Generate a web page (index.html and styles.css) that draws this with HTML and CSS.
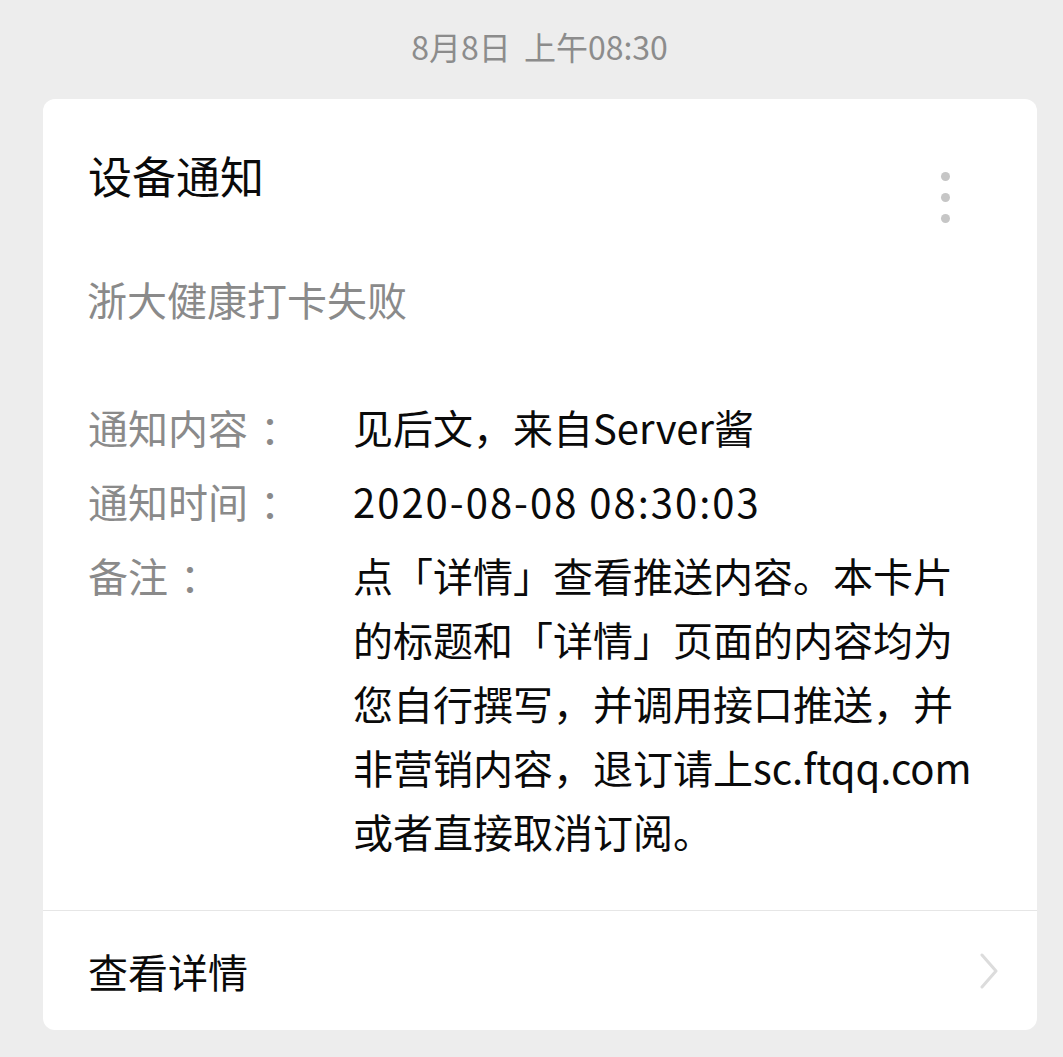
FILE: index.html
```html
<!DOCTYPE html>
<html lang="zh-CN">
<head>
<meta charset="utf-8">
<title>设备通知</title>
<link rel="stylesheet" href="styles.css">
</head>
<body>
  <div class="time-stamp">8月8日 上午08:30</div>
  <div class="card">
    <div class="card-header">
      <div class="card-title">设备通知</div>
      <div class="more" aria-label="更多">
        <span class="dot"></span>
        <span class="dot"></span>
        <span class="dot"></span>
      </div>
    </div>
    <div class="card-subtitle">浙大健康打卡失败</div>
    <div class="fields">
      <div class="label">通知内容<span class="colon">：</span></div>
      <div class="value">见后文，来自Server酱</div>
      <div class="label">通知时间<span class="colon">：</span></div>
      <div class="value value-time">2020-08-08 08:30:03</div>
      <div class="label">备注<span class="colon">：</span></div>
      <div class="value">点「详情」查看推送内容。本卡片的标题和「详情」页面的内容均为您自行撰写，并调用接口推送，并非营销内容，退订请上sc.ftqq.com或者直接取消订阅。</div>
    </div>
    <div class="card-footer">
      <span class="footer-text">查看详情</span>
      <svg class="chevron" width="20" height="36" viewBox="0 0 20 36" aria-hidden="true">
        <path d="M3 2 L17 18 L3 34" fill="none" stroke="#dcdcdc" stroke-width="3" stroke-linecap="round" stroke-linejoin="round"/>
      </svg>
    </div>
  </div>
</body>
</html>
```
FILE: styles.css
```css
html, body {
  margin: 0;
  padding: 0;
}
body {
  background: #ededed;
  font-family: "Noto Sans CJK SC", "Noto Sans", sans-serif;
  color: #111;
}
.time-stamp {
  padding: 26px 0 0 16px;
  height: 40px;
  line-height: 40px;
  font-size: 32px;
  word-spacing: 6px;
  color: #8c8c8c;
  text-align: center;
}
.card {
  margin: 33px 26px 0 43px;
  background: #fff;
  border-radius: 12px;
  overflow: hidden;
}
.card-header {
  display: flex;
  justify-content: space-between;
  align-items: flex-start;
  padding: 45px 87px 0 45px;
}
.card-title {
  font-size: 44px;
  line-height: 62px;
  color: #0a0a0a;
}
.more {
  display: flex;
  flex-direction: column;
  gap: 12px;
  margin-top: 28px;
}
.dot {
  display: block;
  width: 9px;
  height: 9px;
  border-radius: 50%;
  background: #c6c6c6;
}
.card-subtitle {
  margin-top: 48px;
  padding: 0 44px;
  font-size: 40px;
  line-height: 56px;
  color: #8a8a8a;
}
.fields {
  display: grid;
  grid-template-columns: 265px 1fr;
  row-gap: 10px;
  margin-top: 68px;
  padding: 0 56px 0 45px;
  font-size: 40px;
  line-height: 64px;
}
.label {
  color: #8a8a8a;
  white-space: nowrap;
}
.colon {
  padding-left: 12px;
}
.value {
  color: #0a0a0a;
}
.value-time {
  letter-spacing: 2px;
}
.card-footer {
  margin-top: 47px;
  border-top: 1px solid #e6e6e6;
  height: 119px;
  display: flex;
  align-items: center;
  justify-content: space-between;
  padding: 0 38px 0 45px;
}
.footer-text {
  font-size: 40px;
  color: #0a0a0a;
}
.chevron {
  display: block;
}
```
